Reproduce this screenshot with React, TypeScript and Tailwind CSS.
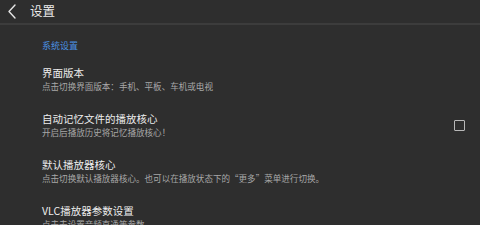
import React from "react";

const font = { fontFamily: '"Noto Sans CJK SC", "Noto Sans", sans-serif' };

function Item({ title, sub, checkbox }: { title: string; sub: string; checkbox?: boolean }) {
  return (
    <div className="flex items-center h-[46px] pl-[42px] pr-[15px]">
      <div className="flex-1 flex flex-col">
        <div className="text-[10.5px] leading-[14px] text-[#ececec]">{title}</div>
        <div className="text-[8.55px] leading-[13px] text-[#a8a8a8] whitespace-nowrap">{sub}</div>
      </div>
      {checkbox && (
        <div className="w-[11px] h-[11px] border-[1.5px] border-[#b8b8b8] rounded-[1px]" />
      )}
    </div>
  );
}

export default function App() {
  return (
    <div className="w-[480px] h-[225px] bg-[#2e2e2e] overflow-hidden" style={font}>
      <div className="h-[25px] flex items-center border-b-[2px] border-[#3c3c3c]">
        <svg width="30" height="25" viewBox="0 0 30 25" className="shrink-0">
          <path d="M15 6 L9 12.5 L15 19" fill="none" stroke="#e6e6e6" strokeWidth="1.4" strokeLinecap="round" strokeLinejoin="round" />
        </svg>
        <div className="text-[12.5px] text-[#ececec] leading-none">设置</div>
      </div>
      <div className="pt-[15px]">
        <div className="pl-[42px] text-[9px] leading-[12px] text-[#4a8ee0]">系统设置</div>
        <div className="pt-[4px]">
          <Item title="界面版本" sub="点击切换界面版本：手机、平板、车机或电视" />
          <Item title="自动记忆文件的播放核心" sub="开启后播放历史将记忆播放核心！" checkbox />
          <Item title="默认播放器核心" sub="点击切换默认播放器核心。也可以在播放状态下的“更多”菜单进行切换。" />
          <Item title="VLC播放器参数设置" sub="点击去设置音频直通等参数" />
        </div>
      </div>
    </div>
  );
}
